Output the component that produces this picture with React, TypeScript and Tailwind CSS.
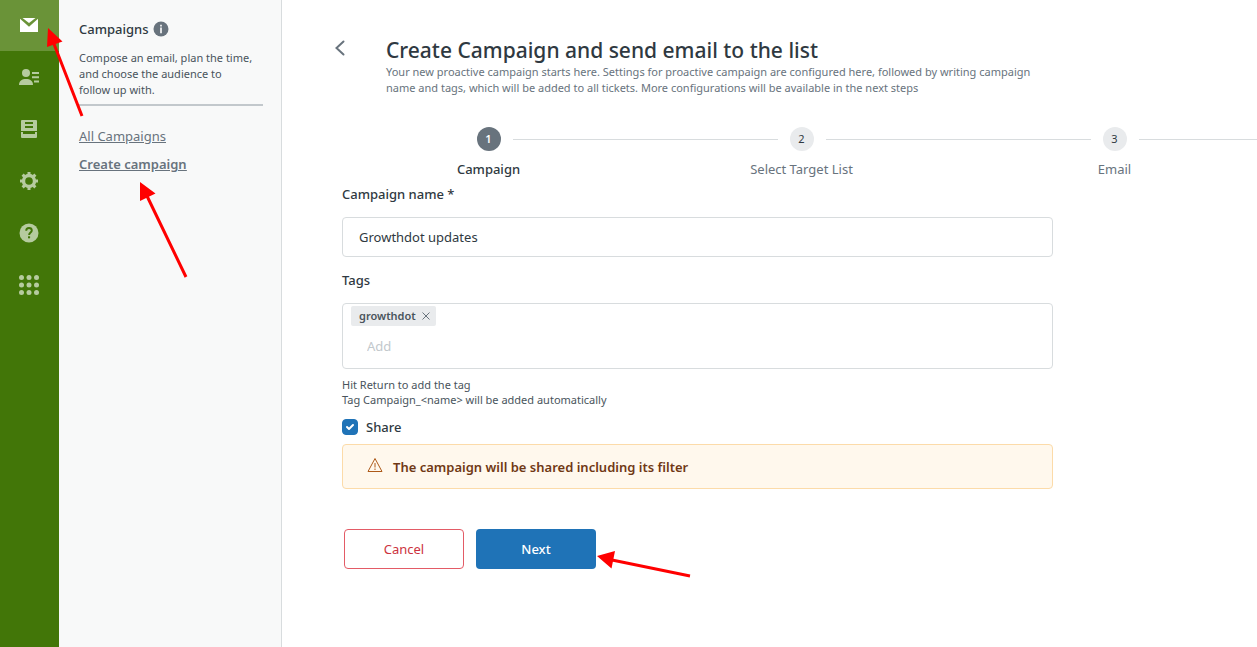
import { useState } from 'react';
import type { KeyboardEvent, ReactNode } from 'react';

interface NavItem {
  label: string;
  icon: ReactNode;
}

const navItems: NavItem[] = [
  {
    label: 'Campaigns',
    icon: (
      <>
        <path d="M5.500 5h13L12 10z" />
        <path d="M3 5.800l9 7.900 9-7.900V19H3z" />
      </>
    ),
  },
  {
    label: 'Contacts',
    icon: (
      <>
        <circle cx="9" cy="8" r="4" />
        <path d="M2 20c0-4.200 3-6 7-6s7 1.800 7 6z" />
        <path d="M15 7h7v2h-7zM15 11.200h7v2h-7zM17 15.400h5v2h-5z" />
      </>
    ),
  },
  {
    label: 'Templates',
    icon: (
      <path
        fillRule="evenodd"
        d="M5 3h14a1 1 0 0 1 1 1v10H4V4a1 1 0 0 1 1-1zm3 2v2h8V5zm0 4v2h8V9zM4 15h2v2h12v-2h2v5a1 1 0 0 1-1 1H5a1 1 0 0 1-1-1z"
      />
    ),
  },
  {
    label: 'Settings',
    icon: (
      <>
        <circle cx="12" cy="12" r="5.500" fill="none" stroke="currentColor" strokeWidth="3.400" />
        <path
          fill="none"
          stroke="currentColor"
          strokeWidth="3"
          d="M12 3v3M12 18v3M3 12h3M18 12h3M5.600 5.600l2 2M16.400 16.400l2 2M5.600 18.400l2-2M16.400 7.600l2-2"
        />
      </>
    ),
  },
  {
    label: 'Help',
    icon: (
      <>
        <circle cx="12" cy="12" r="9.500" />
        <path
          fill="none"
          stroke="#427608"
          strokeWidth="1.900"
          d="M9.200 9.800c0-1.800 1.200-2.800 2.800-2.800s2.800 1 2.800 2.500c0 2-2.700 2.100-2.700 4.500"
        />
        <path fill="#427608" d="M11 15.300h2.100v2H11z" />
      </>
    ),
  },
  {
    label: 'Apps',
    icon: (
      <>
        {[4.5, 12, 19.5].map((y) =>
          [4.5, 12, 19.5].map((x) => <circle key={`${x}-${y}`} cx={x} cy={y} r="2.500" />)
        )}
      </>
    ),
  },
];

const steps = ['Campaign', 'Select Target List', 'Email'];

function NavRail() {
  return (
    <nav className="flex w-[59px] shrink-0 flex-col gap-px bg-[#427608]">
      {navItems.map((item, index) => (
        <button
          key={item.label}
          type="button"
          aria-label={item.label}
          className={`flex h-[51px] items-center justify-center pr-px pb-px ${
            index === 0 ? 'bg-[#6a9338] text-white' : 'text-[#b6cb9f]'
          }`}
        >
          <svg viewBox="0 0 24 24" className="size-6" fill="currentColor">
            {item.icon}
          </svg>
        </button>
      ))}
    </nav>
  );
}

function Sidebar() {
  return (
    <aside className="w-[223px] shrink-0 border-r border-[#d8dcde] bg-[#f8f9f9] py-[19px] pr-[18px] pl-5">
      <h2 className="flex items-center gap-1 text-[13px] leading-5 font-medium">
        Campaigns
        <svg viewBox="0 0 16 16" className="size-4">
          <circle cx="8" cy="8" r="7.500" fill="#68737d" />
          <path d="M7.200 3.700h1.600v1.700H7.200zM7.200 6.600h1.600v5.700H7.200z" fill="#fff" />
        </svg>
      </h2>
      <p className="mt-[11px] border-b-2 border-[#c2c8cc] pb-[6px] text-[11px] leading-4 text-[#49545c]">
        Compose an email, plan the time, and choose the audience to
        <br />
        follow up with.
      </p>
      <div className="mt-5 flex flex-col items-start gap-2 text-[13px] leading-5 text-[#68737d] underline">
        <a href="#all">All Campaigns</a>
        <a href="#create" className="font-semibold">
          Create campaign
        </a>
      </div>
    </aside>
  );
}

function Stepper() {
  return (
    <ol className="mt-[31px] ml-[50px] flex">
      {steps.map((step, index) => (
        <li key={step} className="w-[313px] shrink-0 text-center">
          <div className="flex items-center gap-3">
            <span className={`h-px flex-1 ${index === 0 ? '' : 'bg-[#d8dcde]'}`} />
            <span
              className={`flex size-6 items-center justify-center rounded-full text-[11px] ${
                index === 0 ? 'bg-[#68737d] font-semibold text-white' : 'bg-[#e9ebed]'
              }`}
            >
              {index + 1}
            </span>
            <span className="h-px flex-1 bg-[#d8dcde]" />
          </div>
          <div
            className={`mt-2 text-[13px] leading-5 ${
              index === 0 ? 'font-medium' : 'text-[#68737d]'
            }`}
          >
            {step}
          </div>
        </li>
      ))}
    </ol>
  );
}

function CampaignForm() {
  const [name, setName] = useState('Growthdot updates');
  const [tags, setTags] = useState(['growthdot']);
  const [draft, setDraft] = useState('');
  const [share, setShare] = useState(true);

  const handleTagKey = (e: KeyboardEvent<HTMLInputElement>) => {
    if (e.key !== 'Enter') return;
    e.preventDefault();
    if (draft.trim()) {
      setTags([...tags, draft.trim()]);
      setDraft('');
    }
  };

  return (
    <form
      onSubmit={(e) => e.preventDefault()}
      className="mt-[5px] mr-5 ml-[60px] max-w-[711px] text-[13px] leading-5"
    >
      <label htmlFor="name" className="block font-medium">
        Campaign name *
      </label>
      <input
        id="name"
        value={name}
        onChange={(e) => setName(e.target.value)}
        className="mt-[13px] block h-10 w-full rounded-sm border border-[#d8dcde] px-4"
      />

      <label htmlFor="tags" className="mt-[13px] block font-medium">
        Tags
      </label>
      <div className="mt-[13px] rounded-sm border border-[#d8dcde] px-2 pt-[2px] pb-3">
        <div className="flex flex-wrap gap-1">
          {tags.map((tag) => (
            <span
              key={tag}
              className="flex h-5 items-center gap-[6px] rounded-xs bg-[#e9ebed] pr-[6px] pl-2 text-[11px] font-semibold text-[#49545c]"
            >
              {tag}
              <button
                type="button"
                aria-label={`Remove ${tag}`}
                onClick={() => setTags(tags.filter((t) => t !== tag))}
              >
                <svg viewBox="0 0 8 8" className="size-2" fill="none" stroke="#68737d">
                  <path d="M.5.5l7 7M7.500.5l-7 7" />
                </svg>
              </button>
            </span>
          ))}
        </div>
        <input
          id="tags"
          placeholder="Add"
          value={draft}
          onChange={(e) => setDraft(e.target.value)}
          onKeyDown={handleTagKey}
          className="mt-[10px] block h-5 w-full px-4 outline-none placeholder:text-[#c2c8cc]"
        />
      </div>
      <p className="mt-2 text-[11px] leading-[15px] text-[#49545c]">
        Hit Return to add the tag
        <br />
        Tag Campaign_&lt;name&gt; will be added automatically
      </p>

      <label className="mt-[10px] flex items-center gap-2 font-medium">
        <span className="relative flex size-4">
          <input
            type="checkbox"
            checked={share}
            onChange={(e) => setShare(e.target.checked)}
            className="size-4 appearance-none rounded border border-[#1f73b7] checked:bg-[#1f73b7]"
          />
          <svg
            viewBox="0 0 16 16"
            className="pointer-events-none absolute inset-0 size-4"
            fill="none"
            stroke="#fff"
            strokeWidth="2"
          >
            <path d="M5 8l2 2 4-4" strokeLinecap="round" strokeLinejoin="round" />
          </svg>
        </span>
        Share
      </label>

      {share && (
        <div className="mt-[7px] flex h-[45px] items-center gap-[10px] rounded-sm border border-[#fcdba9] bg-[#fff8ed] px-6 font-semibold text-[#703815]">
          <svg viewBox="0 0 16 16" className="-mt-1 size-4" fill="none" stroke="#ad5918">
            <path d="M8 1.500L15 14.500H1z" strokeLinejoin="round" />
            <path d="M8 6v4.500M8 11.500v1.500" />
          </svg>
          The campaign will be shared including its filter
        </div>
      )}

      <div className="mt-10 flex gap-3 pl-[2px]">
        <button type="button" className="h-10 w-[120px] rounded-sm border border-[#e35b66] text-[#cc3340]">
          Cancel
        </button>
        <button type="submit" className="h-10 w-[120px] rounded-sm bg-[#1f73b7] font-medium text-white">
          Next
        </button>
      </div>
    </form>
  );
}

function Arrows() {
  return (
    <svg
      aria-hidden="true"
      className="pointer-events-none absolute inset-0 size-full"
      fill="#f00"
      stroke="#f00"
    >
      <path d="M82 116L54 44M186 277L147 196M690 576L612 560" strokeWidth="3" />
      <path d="M48 28l14.500 13.500L47 47zM140 182l15.500 11.500L140 201zM597 556l18-5-3.500 17.500z" stroke="none" />
    </svg>
  );
}

export default function App() {
  return (
    <div className="relative flex min-h-screen overflow-hidden bg-white font-['Noto_Sans',sans-serif] text-[#2f3941]">
      <NavRail />
      <Sidebar />
      <main className="min-w-0 flex-1 overflow-hidden pt-9 pb-8">
        <header className="flex items-start pl-[53px]">
          <button type="button" aria-label="Back" className="mt-1 flex w-[51px]">
            <svg
              viewBox="0 0 10 16"
              className="h-4 w-[10px]"
              fill="none"
              stroke="#68737d"
              strokeWidth="2"
              strokeLinecap="round"
            >
              <path d="M8.500 1.500L1.500 8l7 6.500" />
            </svg>
          </button>
          <div className="max-w-[660px]">
            <h1 className="text-[21px] leading-7 font-medium">
              Create Campaign and send email to the list
            </h1>
            <p className="text-[11px] leading-4 text-[#68737d]">
              Your new proactive campaign starts here. Settings for proactive campaign are configured here,
              followed by writing campaign name and tags, which will be added to all tickets. More
              configurations will be available in the next steps
            </p>
          </div>
        </header>
        <Stepper />
        <CampaignForm />
      </main>
      <Arrows />
    </div>
  );
}
